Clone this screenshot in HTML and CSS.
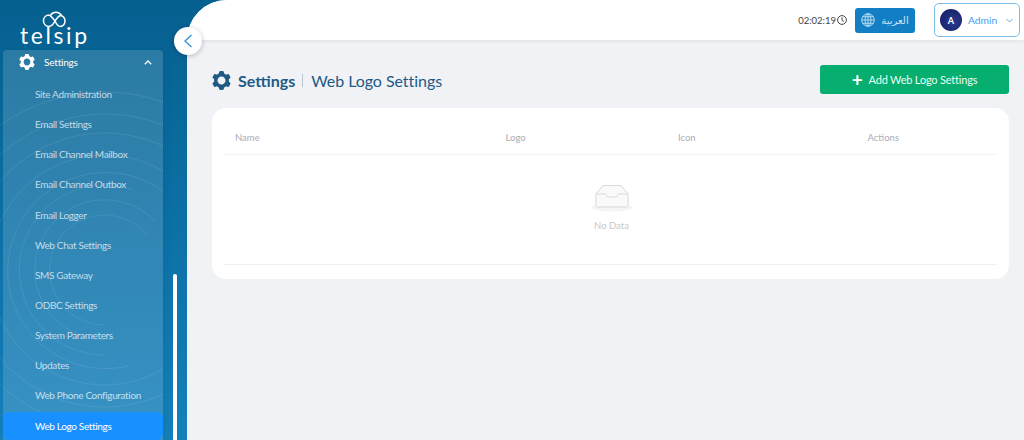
FILE: index.html
```html
<!DOCTYPE html>
<html lang="en">
<head>
<meta charset="utf-8">
<title>Web Logo Settings</title>
<link rel="stylesheet" href="styles.css">
</head>
<body>
<svg class="defs" width="0" height="0" aria-hidden="true">
  <symbol id="gear" viewBox="64 64 896 896">
    <path fill-rule="evenodd" d="M924.8 625.7l-65.5-56c3.1-19 4.7-38.4 4.7-57.8s-1.6-38.8-4.7-57.8l65.5-56a32.03 32.03 0 0 0 9.3-35.2l-.9-2.6a443.74 443.74 0 0 0-79.7-137.9l-1.8-2.1a32.12 32.12 0 0 0-35.1-9.5l-81.3 28.9c-30-24.6-63.5-44-99.7-57.6l-15.7-85a32.05 32.05 0 0 0-25.8-25.7l-2.7-.5c-52.1-9.4-106.9-9.4-159 0l-2.7.5a32.05 32.05 0 0 0-25.8 25.7l-15.8 85.4a351.86 351.86 0 0 0-99 57.4l-81.9-29.1a32 32 0 0 0-35.1 9.5l-1.8 2.1a446.02 446.02 0 0 0-79.7 137.9l-.9 2.6c-4.5 12.5-.8 26.5 9.3 35.2l66.3 56.6c-3.1 18.8-4.6 38-4.6 57.1 0 19.2 1.5 38.4 4.6 57.1L99 625.5a32.03 32.03 0 0 0-9.3 35.2l.9 2.6c18.1 50.4 44.9 96.9 79.7 137.9l1.8 2.1a32.12 32.12 0 0 0 35.1 9.5l81.9-29.1c29.8 24.5 63.1 43.9 99 57.4l15.8 85.4a32.05 32.05 0 0 0 25.8 25.7l2.7.5a449.4 449.4 0 0 0 159 0l2.7-.5a32.05 32.05 0 0 0 25.8-25.7l15.7-85a350 350 0 0 0 99.7-57.6l81.3 28.9a32 32 0 0 0 35.1-9.5l1.8-2.1c34.8-41.1 61.6-87.5 79.7-137.9l.9-2.6c4.5-12.3.8-26.3-9.3-35zM512 701c-104.9 0-190-85.1-190-190s85.1-190 190-190 190 85.1 190 190-85.1 190-190 190z"/>
  </symbol>
</svg>
<div class="app">
  <aside class="sidebar">
    <svg class="arcs" width="187" height="440" viewBox="0 0 187 440" fill="none" stroke="#fff" stroke-opacity=".09" aria-hidden="true">
      <path d="M147 235A55 55 0 1 0 105 325"/>
      <path d="M155 221A70 70 0 1 0 115 339"/>
      <path d="M133 190A85 85 0 1 0 105 355"/>
      <path d="M163 191A98 98 0 1 0 128 366"/>
      <path d="M163 171A115 115 0 1 0 163 369"/>
      <path d="M163 146A137 137 0 1 0 163 394"/>
      <path d="M163 125A156 156 0 1 0 163 415"/>
      <path d="M163 102A178 178 0 1 0 163 438"/>
    </svg>
    <div class="logo">
      <svg class="logo-cloud" width="26" height="20" viewBox="0 0 26 20" fill="none" stroke="#fff" stroke-width="1.500" aria-hidden="true">
        <path d="M13 13C10 9 8 7 6.500 7A5.800 5.800 0 0 0 6.500 18.500C9 18.500 11 17 13 13C15 10 16.500 7.500 19 7.500A5.800 5.800 0 0 1 19 18.500C16 18.500 15 17 13 13"/>
        <path d="M8.500 7.300A6.500 6.500 0 0 1 19.500 7.500"/>
      </svg>
      <div class="logo-text">telsip</div>
    </div>
    <nav class="menu">
      <div class="menu-head">
        <svg class="head-gear" width="16" height="16"><use href="#gear"/></svg>
        <span class="head-label">Settings</span>
        <svg class="head-caret" width="8" height="5" viewBox="0 0 8 5" fill="none" stroke="#fff" stroke-width="1.300" aria-hidden="true"><path d="M.8 4.200 4 1l3.200 3.200"/></svg>
      </div>
      <a class="menu-item">Site Administration</a>
      <a class="menu-item">Email Settings</a>
      <a class="menu-item">Email Channel Mailbox</a>
      <a class="menu-item">Email Channel Outbox</a>
      <a class="menu-item">Email Logger</a>
      <a class="menu-item">Web Chat Settings</a>
      <a class="menu-item">SMS Gateway</a>
      <a class="menu-item">ODBC Settings</a>
      <a class="menu-item">System Parameters</a>
      <a class="menu-item">Updates</a>
      <a class="menu-item">Web Phone Configuration</a>
      <a class="menu-item active">Web Logo Settings</a>
    </nav>
    <div class="scroll-thumb"></div>
  </aside>
  <button class="collapse" aria-label="Collapse">
    <svg width="10" height="16" viewBox="0 0 10 16" fill="none" stroke="#2f8fd8" stroke-width="1.300" aria-hidden="true"><path d="M8.500 2 2 8l6.500 6"/></svg>
  </button>
  <main class="main">
    <header class="topbar">
      <span class="clock">02:02:19</span>
      <svg class="clock-icon" width="10" height="10" viewBox="0 0 10 10" fill="none" stroke="#444" aria-hidden="true"><circle cx="5" cy="5" r="4.400"/><path d="M5 2.400V5.300L6.800 6.500"/></svg>
      <button class="lang">
        <svg width="14" height="14" viewBox="0 0 13 13" fill="none" stroke="#cfe6f7" stroke-width=".8" aria-hidden="true"><circle cx="6.500" cy="6.500" r="5.800"/><ellipse cx="6.500" cy="6.500" rx="2.700" ry="5.800"/><path d="M6.500.7v11.600M.7 6.500h11.600M1.500 3.500h10M1.500 9.500h10"/></svg>
        <span class="lang-label">العربية</span>
      </button>
      <div class="user">
        <span class="avatar">A</span>
        <span class="user-name">Admin</span>
        <svg class="user-caret" width="7" height="5" viewBox="0 0 7 5" fill="none" stroke="#6aa9e0" aria-hidden="true"><path d="M.5 1 3.500 4l3-3"/></svg>
      </div>
    </header>
    <section class="content">
      <div class="page-head">
        <h1 class="title">
          <svg class="title-gear" width="19" height="19"><use href="#gear"/></svg>
          <strong>Settings</strong>
          <span class="title-sep"></span>
          <span class="title-sub">Web Logo Settings</span>
        </h1>
        <button class="add-btn"><span class="plus">+</span>Add Web Logo Settings</button>
      </div>
      <div class="card">
        <div class="table-head">
          <span class="col-name">Name</span>
          <span class="col-logo">Logo</span>
          <span class="col-icon">Icon</span>
          <span class="col-actions">Actions</span>
        </div>
        <div class="empty">
          <svg class="empty-icon" width="42" height="28" viewBox="0 0 42 28" aria-hidden="true">
            <ellipse cx="21" cy="23.500" rx="21" ry="4" fill="#f5f5f5"/>
            <path d="M5 10 12 1.500H30L37 10V21.500a1.500 1.500 0 0 1-1.500 1.500H6.500A1.500 1.500 0 0 1 5 21.500Z" fill="#fafafa" stroke="#d9d9d9"/>
            <path d="M5 10H14.500C15.500 10 15.500 13 17 13H25C26.500 13 26.500 10 27.500 10H37" fill="none" stroke="#d9d9d9"/>
          </svg>
          <span class="empty-label">No Data</span>
        </div>
      </div>
    </section>
  </main>
</div>
</body>
</html>
```
FILE: styles.css
```css
* { box-sizing: border-box; }
html, body { margin: 0; height: 100%; overflow: hidden; }
body { font-family: "Lato", "Noto Sans", sans-serif; background: #f0f2f5; }
.defs { position: absolute; }
.app { display: flex; height: 440px; width: 1024px; position: relative; background: linear-gradient(180deg, #05608f 0%, #1480bb 100%); }

.sidebar { width: 187px; flex: none; height: 440px; position: relative; overflow: hidden; background: linear-gradient(180deg, #05608f 0%, #1480bb 100%); }
.arcs { position: absolute; left: 0; top: 0; }
.logo { height: 50px; padding-left: 20px; position: relative; display: flex; flex-direction: column; }
.logo-cloud { margin: 8px 0 0 22px; flex: none; }
.logo-text { color: #fff; font: 400 23px/20px "Lato", sans-serif; letter-spacing: 2.600px; margin-top: -3px; }

.menu { width: 160px; margin-left: 3px; background: rgba(255,255,255,.15); border-radius: 4px 4px 0 0; position: relative; box-shadow: 3px 0 6px rgba(0,0,0,.05); }
.menu-head { height: 24px; display: flex; align-items: center; padding: 0 11px 0 16px; color: #fff; margin-bottom: 5px; }
.head-gear { fill: #fff; flex: none; }
.head-label { font-size: 10px; margin-left: 9px; flex: 1; letter-spacing: -.2px; }
.menu-item { display: flex; align-items: center; height: 30.150px; padding-left: 32px; font-size: 10px; letter-spacing: -.35px; color: rgba(255,255,255,.72); }
.menu-item.active { background: #1890ff; color: #fff; border-radius: 6px; margin-top: 1px; height: 28px; }
.scroll-thumb { position: absolute; left: 173px; top: 274px; width: 4px; height: 166px; background: #fff; border-radius: 3px 3px 0 0; }

.collapse { position: absolute; left: 174px; top: 27px; width: 28px; height: 28px; border-radius: 50%; border: 0; padding: 0; background: #fff; box-shadow: 0 1px 5px rgba(0,0,0,.25); display: flex; align-items: center; justify-content: center; z-index: 3; }

.main { flex: 1; display: flex; flex-direction: column; background: #f0f2f5; border-radius: 40px 0 0 0; overflow: hidden; }
.topbar { height: 40px; flex: none; background: #fff; display: flex; align-items: center; padding: 0 4px 0 0; justify-content: flex-end; box-shadow: 0 1px 4px rgba(0,0,0,.08); position: relative; }
.clock { font-size: 9.500px; color: #444; }
.clock-icon { margin-left: 1px; }
.lang { width: 60px; height: 25px; margin-left: 8px; border: 0; border-radius: 3px; background: #127fc4; display: flex; align-items: center; justify-content: center; gap: 6px; padding: 0; }
.lang-label { font: 10px "Noto Sans", "DejaVu Sans", sans-serif; color: #cfe6f7; }
.user { width: 86px; height: 34px; margin-left: 19px; border: 1px solid #7cc0e8; border-radius: 5px; display: flex; align-items: center; padding-left: 5px; }
.avatar { width: 22px; height: 22px; border-radius: 50%; background: radial-gradient(circle at 60% 60%, #2a3a8f, #101c5c); color: #fff; font-size: 9px; font-weight: 700; display: flex; align-items: center; justify-content: center; }
.user-name { font-size: 10.300px; color: #4a9df0; margin-left: 6px; flex: 1; }
.user-caret { margin-right: 6px; }

.content { flex: 1; padding: 25px 15px 0 25px; }
.page-head { display: flex; justify-content: space-between; align-items: flex-start; height: 43px; }
.title { margin: 4px 0 0; display: flex; align-items: center; height: 22px; color: #1f5a85; font-size: 16px; font-weight: 400; }
.title-gear { fill: #1f5a85; margin-right: 7px; }
.title strong { font-weight: 700; }
.title-sep { width: 1px; height: 13px; background: #b9c6d2; margin: 0 8px 0 7px; }
.title-sub { font-size: 16px; letter-spacing: -.05px; }
.add-btn { width: 189px; height: 29px; border: 0; border-radius: 3px; background: #06ae70; color: #e7fff5; font: 400 11px "Lato", sans-serif; letter-spacing: -.2px; display: flex; align-items: center; justify-content: center; }
.plus { font-size: 19px; font-weight: 700; line-height: 1; margin-right: 6px; color: #fff; }

.card { width: 797px; height: 171px; background: #fff; border-radius: 14px; padding: 0 12px; }
.table-head { display: grid; grid-template-columns: 270.500px 172.500px 189.500px 1fr; height: 47px; align-items: center; padding: 12px 0 0 11px; font-size: 9.500px; color: #a9acb8; border-bottom: 1px solid #f4f4f4; }
.empty { height: 110px; border-bottom: 1px solid #f0f0f0; display: flex; flex-direction: column; align-items: center; padding-top: 29px; }
.empty-icon { margin-left: 2px; }
.empty-label { margin-top: 8px; margin-left: 2px; font-size: 9.500px; color: #c8c8c8; }
```
